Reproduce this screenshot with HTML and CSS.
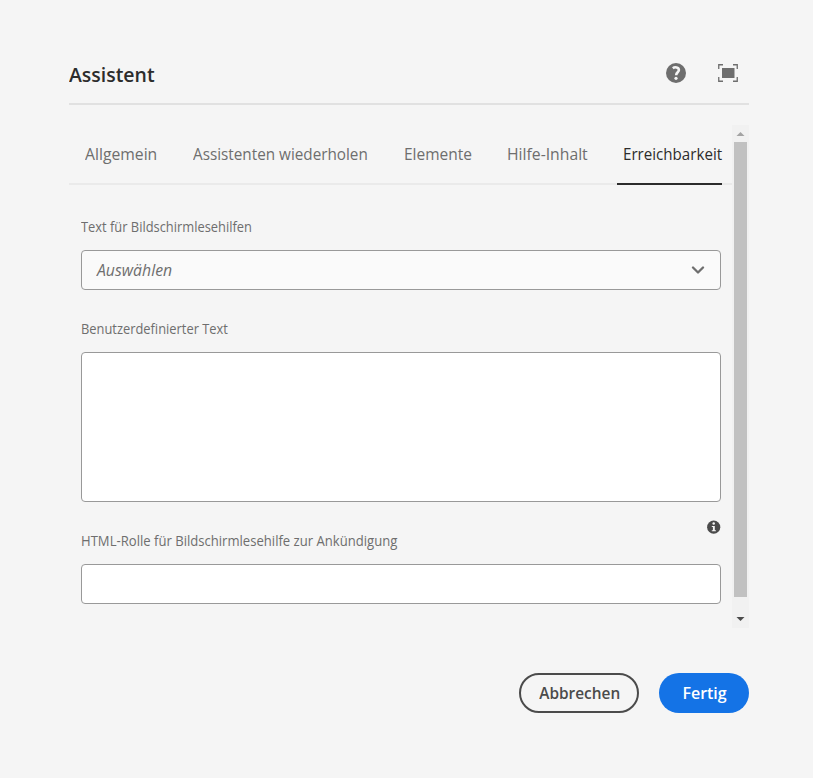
FILE: index.html
```
<!DOCTYPE html>
<html lang="de">
<head>
<meta charset="utf-8">
<title>Assistent</title>
<link rel="stylesheet" href="styles.css">
</head>
<body>
<main class="dialog">
  <header class="header">
    <h1 class="title">Assistent</h1>
    <div class="actions">
      <svg class="help" width="20" height="20" viewBox="0 0 20 20"><circle cx="10" cy="10" r="10" fill="#6e6e6e"/><path d="M6.8 5.2C8.8 3.7 12.9 4.1 12.9 7C12.9 9.3 10.2 9.2 10.2 12.2" fill="none" stroke="#f5f5f5" stroke-width="2.6"/><circle cx="10" cy="15.3" r="1.6" fill="#f5f5f5"/></svg>
      <svg class="expand" width="20" height="18" viewBox="0 0 20 18"><path d="M5 .75H.75V5M15 .75h4.25V5M.75 13v4.25H5M19.25 13v4.25H15" fill="none" stroke="#6e6e6e" stroke-width="1.3"/><path d="M4 4h12.5v10H4z" fill="#6e6e6e"/></svg>
    </div>
  </header>
  <div class="scroller">
    <div class="content">
      <nav class="tabs">
        <a class="tab general"><span>Allgemein</span></a>
        <a class="tab repeat"><span>Assistenten wiederholen</span></a>
        <a class="tab items"><span>Elemente</span></a>
        <a class="tab helptab"><span>Hilfe-Inhalt</span></a>
        <a class="tab selected"><span>Erreichbarkeit</span></a>
      </nav>
      <form class="form">
        <label class="label">Text für Bildschirmlesehilfen</label>
        <div class="field select">
          <span class="placeholder">Auswählen</span>
          <svg width="14" height="9" viewBox="0 0 14 9"><path d="M2 1.5l5 5 5-5" fill="none" stroke="#6e6e6e" stroke-width="2.3" stroke-linecap="round" stroke-linejoin="round"/></svg>
        </div>
        <label class="label">Benutzerdefinierter Text</label>
        <div class="field area"></div>
        <div class="info-row">
          <label class="label role">HTML-Rolle für Bildschirmlesehilfe zur Ankündigung</label>
          <svg class="info" width="14" height="14" viewBox="0 0 14 14"><circle cx="6.7" cy="7.2" r="6.6" fill="#4b4b4b"/><circle cx="6.7" cy="3.6" r="1.25" fill="#f5f5f5"/><path d="M4.8 5.9h3v4.3h1.1v1.1H4.8v-1.1h1.1V7H4.8z" fill="#f5f5f5"/></svg>
        </div>
        <div class="field"></div>
      </form>
    </div>
    <div class="scrollbar">
      <svg width="17" height="17" viewBox="0 0 17 17"><path d="M4.5 11l4-4 4 4z" fill="#a3a3a3"/></svg>
      <div class="thumb"></div>
      <svg class="down" width="17" height="17" viewBox="0 0 17 17"><path d="M4.5 6l4 4 4-4z" fill="#4b4b4b"/></svg>
    </div>
  </div>
  <footer class="footer">
    <button class="button cancel"><span>Abbrechen</span></button>
    <button class="button done"><span>Fertig</span></button>
  </footer>
</main>
</body>
</html>
```
FILE: styles.css
```
* { box-sizing: border-box; }
body {
  margin: 0;
  background: #f5f5f5;
  font-family: "Open Sans", "Noto Sans", sans-serif;
  color: #6e6e6e;
}
svg { display: block; }
.dialog { width: 680px; margin-left: 69px; padding-top: 45px; }
.header {
  height: 60px;
  display: flex;
  justify-content: space-between;
  border-bottom: 2px solid #e1e1e1;
}
.title {
  margin: 0;
  padding-top: 1px;
  font-size: 20px;
  font-weight: 600;
  line-height: 58px;
  color: #2c2c2c;
  transform: scaleX(.972);
  transform-origin: 0 0;
}
.actions { display: flex; gap: 32px; padding-right: 11px; }
.help { margin-top: 18px; }
.expand { margin-top: 19px; }
.scroller { display: flex; margin-top: 20px; height: 503px; }
.content { width: 663px; }
.tabs {
  display: flex;
  gap: 36px;
  height: 60px;
  padding-left: 16px;
  border-bottom: 2px solid #eaeaea;
}
.tab {
  position: relative;
  flex: none;
  font-size: 17px;
  line-height: 58px;
  white-space: nowrap;
}
.tab span {
  display: block;
  width: max-content;
  transform: scaleX(.925);
  transform-origin: 0 0;
}
.general { width: 72px; }
.repeat { width: 175px; }
.repeat span { transform: scaleX(.898); }
.items { width: 67px; }
.items span { transform: scaleX(.911); }
.helptab { width: 80px; }
.selected { width: 100px; color: #2c2c2c; }
.selected span { transform: scaleX(.89); }
.selected::after {
  content: "";
  position: absolute;
  left: -6px;
  right: 1px;
  bottom: -2px;
  height: 2px;
  background: #2c2c2c;
}
.form { padding: 28px 11px 0 12px; }
.label {
  display: block;
  width: max-content;
  font-size: 14px;
  line-height: 27px;
  height: 37px;
  transform: scaleX(.92);
  transform-origin: 0 0;
}
.field {
  height: 40px;
  border: 1px solid #999;
  border-radius: 4px;
  background: #fff;
}
.select {
  display: flex;
  align-items: center;
  justify-content: space-between;
  margin-bottom: 25px;
  padding: 0 15px;
  background: #fafafa;
}
.placeholder {
  font-size: 17px;
  font-style: italic;
  line-height: 38px;
  transform: scaleX(.93);
  transform-origin: 0 0;
}
.area { height: 150px; }
.info-row { display: flex; justify-content: space-between; padding-top: 18px; height: 62px; }
.role { line-height: 41px; transform: scaleX(.935); }
.scrollbar { width: 17px; background: #f1f1f1; }
.thumb { width: 13px; height: 455px; margin: 0 auto; background: #c1c1c1; }
.down { margin-top: 14px; }
.footer { display: flex; justify-content: flex-end; gap: 20px; margin-top: 45px; }
.button {
  display: flex;
  align-items: center;
  justify-content: center;
  height: 40px;
  border-radius: 20px;
  padding: 0 0 1px 1px;
  font-family: inherit;
  font-size: 17px;
  font-weight: 600;
}
.cancel { width: 120px; border: 2px solid #4b4b4b; background: transparent; color: #4b4b4b; }
.cancel span { transform: scaleX(.906); }
.done { width: 90px; border: 0; background: #1473e6; color: #fff; }
.done span { transform: scaleX(.94); }
```
